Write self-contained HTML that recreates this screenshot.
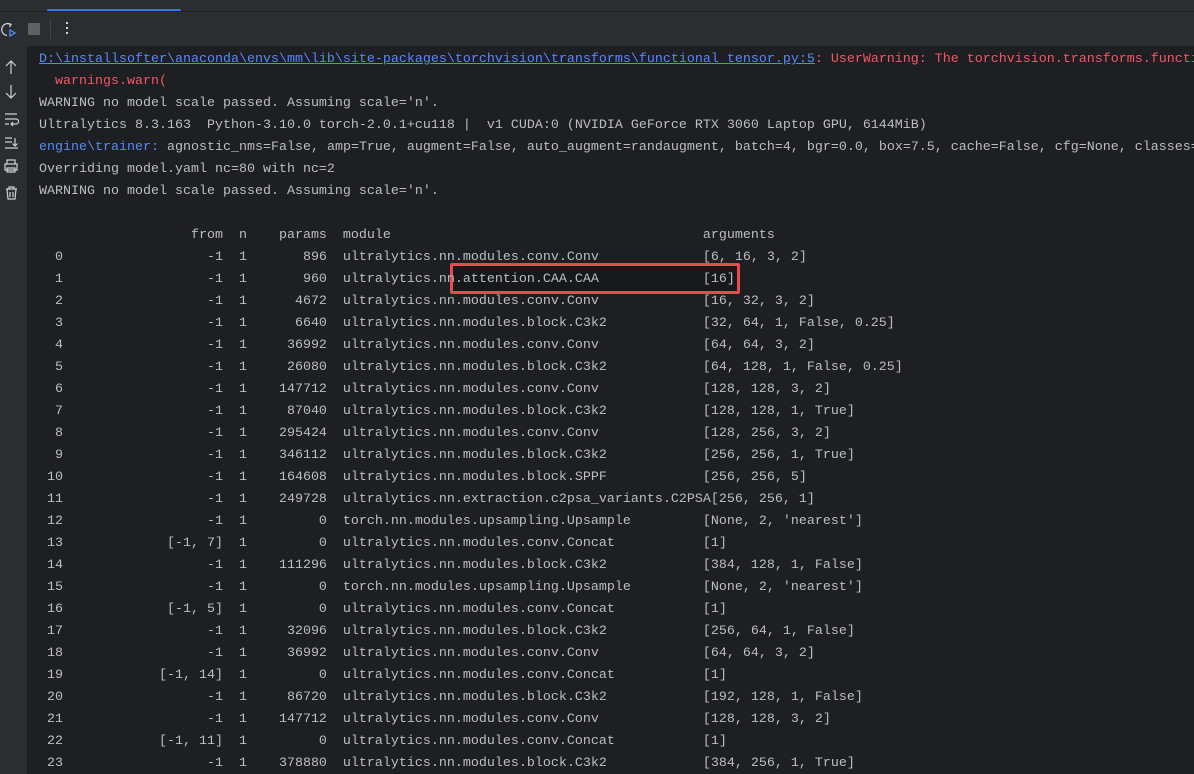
<!DOCTYPE html>
<html><head><meta charset="utf-8"><style>
html,body{margin:0;width:1194px;height:774px;overflow:hidden}
body{background:#1e1f22;font-family:"Liberation Mono",monospace;position:relative}
#top{position:absolute;left:0;top:0;width:1194px;height:11px;background:#2b2d30}
#tab{position:absolute;left:47px;top:9px;width:134px;height:3px;background:#3574f0;border-radius:2px}
#sep{position:absolute;left:0;top:11px;width:1194px;height:1px;background:#1e1f22}
#tb{position:absolute;left:0;top:12px;width:1194px;height:34px;background:#2b2d30}
#gut{position:absolute;left:0;top:46px;width:27px;height:728px;background:#2b2d30}
#wrap{position:absolute;left:27px;top:46px;width:1167px;height:728px;overflow:hidden}
#con{position:absolute;left:12px;top:3px;font-size:13.33px;line-height:22px;color:#bcbec4;white-space:pre}
.l{color:#548af7;text-decoration:underline}
.r{color:#f75464}
.b{color:#548af7}
#box{position:absolute;left:450px;top:263px;width:284px;height:25px;border:3px solid #e84a4f;border-radius:2px;background:#17181a}
svg{position:absolute}
</style></head><body>
<div id="top"></div><div id="tab"></div><div id="sep"></div>
<div id="tb"></div>
<svg style="left:0;top:20px" width="20" height="20" viewBox="0 0 20 20" fill="none" stroke="#ced0d6" stroke-width="1.3"><path d="M11 4.5A6 6 0 1 0 7 15.5"/><path d="M8 3.5l3 1-1.5 2.5"/><path d="M10 10v6l5-3z" stroke="#548af7"/></svg>
<div style="position:absolute;left:28px;top:23px;width:12px;height:12px;background:#5d6360;border-radius:1px"></div>
<div style="position:absolute;left:50px;top:19px;width:1px;height:20px;background:#43454a"></div>
<div style="position:absolute;left:66px;top:22px;width:2px;height:2px;background:#ced0d6;box-shadow:0 5px #ced0d6,0 10px #ced0d6"></div>
<div id="gut"></div>
<svg style="left:3px;top:58px" width="18" height="150" viewBox="0 0 18 150" fill="none" stroke="#ced0d6" stroke-width="1.2">
<path d="M8 3v13M3 8l5-5 5 5"/>
<path d="M8 27v13M3 35l5 5 5-5"/>
<path d="M2 56h12M2 61h11a2.5 2.5 0 0 1 0 5h-4M2 66h4M10 64l-2 2 2 2"/>
<path d="M2 80h7M2 84h7M2 90h13M12 80v8M9.5 85.5l2.5 2.5 2.5-2.5"/>
<path d="M4 106v-4h8v4M2 106h12v6H2zM4 110h8v4H4z"/>
<path d="M3 131h11M6 131v-2h5v2M4 131l1 10h7l1-10M7 134v5M10 134v5"/>
</svg>
<div id="box"></div>
<div id="wrap"><div id="con"><span class="l">D:\installsofter\anaconda\envs\mm\lib\site-packages\torchvision\transforms\functional_tensor.py:5</span><span class="r">: UserWarning: The torchvision.transforms.functional_tensor module is deprecated</span>
<span class="r">  warnings.warn(</span>
WARNING no model scale passed. Assuming scale='n'.
Ultralytics 8.3.163  Python-3.10.0 torch-2.0.1+cu118 |  v1 CUDA:0 (NVIDIA GeForce RTX 3060 Laptop GPU, 6144MiB)
<span class="b">engine\trainer:</span> agnostic_nms=False, amp=True, augment=False, auto_augment=randaugment, batch=4, bgr=0.0, box=7.5, cache=False, cfg=None, classes=None
Overriding model.yaml nc=80 with nc=2
WARNING no model scale passed. Assuming scale='n'.

                   from  n    params  module                                       arguments
  0                  -1  1       896  ultralytics.nn.modules.conv.Conv             [6, 16, 3, 2]
  1                  -1  1       960  ultralytics.nn.attention.CAA.CAA             [16]
  2                  -1  1      4672  ultralytics.nn.modules.conv.Conv             [16, 32, 3, 2]
  3                  -1  1      6640  ultralytics.nn.modules.block.C3k2            [32, 64, 1, False, 0.25]
  4                  -1  1     36992  ultralytics.nn.modules.conv.Conv             [64, 64, 3, 2]
  5                  -1  1     26080  ultralytics.nn.modules.block.C3k2            [64, 128, 1, False, 0.25]
  6                  -1  1    147712  ultralytics.nn.modules.conv.Conv             [128, 128, 3, 2]
  7                  -1  1     87040  ultralytics.nn.modules.block.C3k2            [128, 128, 1, True]
  8                  -1  1    295424  ultralytics.nn.modules.conv.Conv             [128, 256, 3, 2]
  9                  -1  1    346112  ultralytics.nn.modules.block.C3k2            [256, 256, 1, True]
 10                  -1  1    164608  ultralytics.nn.modules.block.SPPF            [256, 256, 5]
 11                  -1  1    249728  ultralytics.nn.extraction.c2psa_variants.C2PSA[256, 256, 1]
 12                  -1  1         0  torch.nn.modules.upsampling.Upsample         [None, 2, 'nearest']
 13             [-1, 7]  1         0  ultralytics.nn.modules.conv.Concat           [1]
 14                  -1  1    111296  ultralytics.nn.modules.block.C3k2            [384, 128, 1, False]
 15                  -1  1         0  torch.nn.modules.upsampling.Upsample         [None, 2, 'nearest']
 16             [-1, 5]  1         0  ultralytics.nn.modules.conv.Concat           [1]
 17                  -1  1     32096  ultralytics.nn.modules.block.C3k2            [256, 64, 1, False]
 18                  -1  1     36992  ultralytics.nn.modules.conv.Conv             [64, 64, 3, 2]
 19            [-1, 14]  1         0  ultralytics.nn.modules.conv.Concat           [1]
 20                  -1  1     86720  ultralytics.nn.modules.block.C3k2            [192, 128, 1, False]
 21                  -1  1    147712  ultralytics.nn.modules.conv.Conv             [128, 128, 3, 2]
 22            [-1, 11]  1         0  ultralytics.nn.modules.conv.Concat           [1]
 23                  -1  1    378880  ultralytics.nn.modules.block.C3k2            [384, 256, 1, True]</div></div>
</body></html>
